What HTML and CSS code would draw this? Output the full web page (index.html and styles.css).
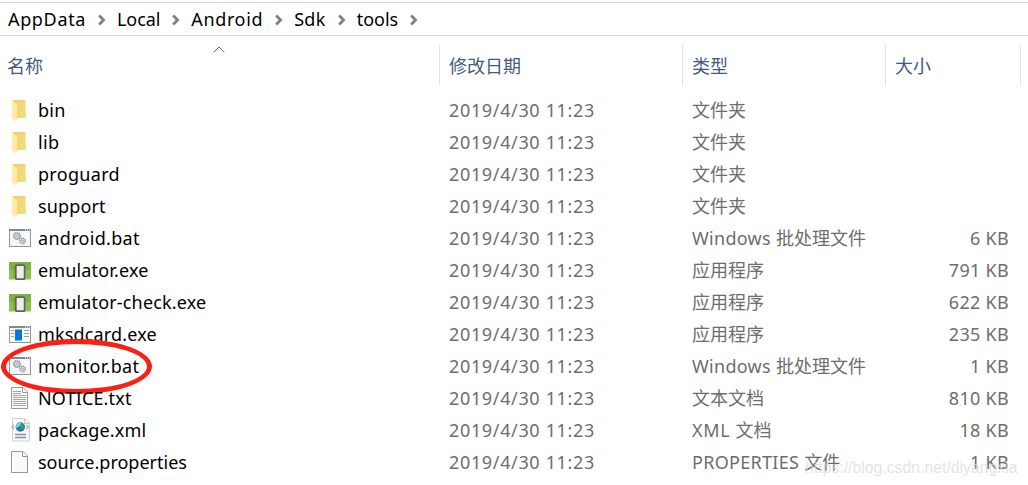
FILE: index.html
```html
<!DOCTYPE html>
<html lang="zh-CN">
<head>
  <meta charset="UTF-8" />
  <title>tools</title>
  <link rel="stylesheet" href="styles.css">
</head>
<body>

<!-- iconos compartidos -->
<svg class="sprites" width="0" height="0">
  <defs>
    <linearGradient id="amarillo" x1="0" y1="0" x2="1" y2="1">
      <stop offset="0" stop-color="#f3d070" />
      <stop offset="1" stop-color="#fadb80" />
    </linearGradient>
  </defs>
  <symbol id="chevron" viewBox="0 0 8 12">
    <path d="M1.2 1.5L5.6 6L1.2 10.5" fill="none" stroke="#808080" stroke-width="2.8" />
  </symbol>
  <symbol id="folder" viewBox="0 0 24 24">
    <path d="M6 2h12.500v12l.5 1v5H6z" fill="url(#amarillo)" />
    <path d="M5 2l4.500 3.500q.5 .5 .5 1.500v15l-1 1-4-3z" fill="#ffe9a6" />
    <path d="M5.500 2H9v3z" fill="#f3d070" />
  </symbol>
  <symbol id="bat" viewBox="0 0 24 24">
    <rect x="2.5" y="3.5" width="21" height="17" fill="#f7f7f7" stroke="#92959a" />
    <path d="M2 4h22" stroke="#85888d" stroke-width="2" />
    <path d="M18 4h1M20 4h1M22 4h1" stroke="#fff" />
    <circle cx="10" cy="10" r="3.2" fill="#e8ecef" stroke="#8595a0" stroke-width="1.8" stroke-dasharray="1.3 .8" />
    <circle cx="10" cy="10" r="2.5" fill="none" stroke="#a4b0b9" stroke-width=".8" />
    <circle cx="10" cy="10" r="1" fill="#fff" stroke="#82919d" stroke-width=".7" />
    <circle cx="15.5" cy="15" r="2.7" fill="#e8ecef" stroke="#8595a0" stroke-width="1.6" stroke-dasharray="1.3 .8" />
    <circle cx="15.5" cy="15" r="1" fill="#fff" stroke="#82919d" stroke-width=".7" />
  </symbol>
  <symbol id="emulator" viewBox="0 0 24 24">
    <rect x="2" y="4" width="22" height="17.5" rx="1" fill="#8bc34a" />
    <path d="M2 5q0-1 1-1h20q1 0 1 1v7H2z" fill="#7cb342" />
    <path d="M8 21l-2-2V8l3-2z" fill="#65983a" opacity=".5" />
    <rect x="8.8" y="7.2" width="8.8" height="14" rx="1" fill="#eee" stroke="#616161" stroke-width="1.7" />
  </symbol>
  <symbol id="exe" viewBox="0 0 24 24">
    <rect x="2.5" y="4.5" width="21" height="16" fill="#f8f8f8" stroke="#92959a" />
    <path d="M2 5h22" stroke="#85888d" stroke-width="2" />
    <path d="M18 5h1M20 5h1M22 5h1" stroke="#fff" />
    <rect x="8" y="7.5" width="7" height="11" fill="#0078d7" />
    <path d="M4 8.5h3M4 11.5h3M4 14.5h3M17 8.5h5M17 11.5h5M17 14.5h5" stroke="#969a9e" />
  </symbol>
  <symbol id="txt" viewBox="0 0 24 24">
    <path d="M4.500 1.500h11.500l4.500 4.500v16.500h-16z" fill="#fafafa" stroke="#969696" />
    <path d="M15.500 2v4.500h5" fill="#fff" stroke="#969696" />
    <path d="M6 5.500h8M6 7.500h8M6 9.500h13M6 11.500h13M6 13.500h13M6 15.500h13M6 17.500h13M6 19.500h13" stroke="#a5a5a5" />
  </symbol>
  <symbol id="xml" viewBox="0 0 24 24">
    <path d="M5.500 .5h12.500l4.500 4.500v18h-17z" fill="#f9f9f9" stroke="#d2d2d2" />
    <path d="M17.500 1v4.500h5" fill="#ececec" stroke="#c4c4c4" />
    <circle cx="13.300" cy="9" r="4.700" fill="#1f70bd" />
    <path d="M9.500 6.500q2-2.500 5-2l-1 3-2 1-1.500 2-1-2z" fill="#86ccec" />
    <path d="M14 6l3 0 1 3-2 3-2-1-1-3zM10 10l2 1v2z" fill="#2f9e55" />
    <path d="M7 7l-2 2 2 2M19.500 7l2 2-2 2" fill="none" stroke="#8eb3cc" stroke-width="1.300" />
    <path d="M8 16.500h11M8 19.500h11" stroke="#8c8cad" stroke-width="1.300" />
  </symbol>
  <symbol id="file" viewBox="0 0 24 24">
    <path d="M4.500 1.500h11.500l4.500 4.500v16.500h-16z" fill="#fafafa" stroke="#969696" />
    <path d="M15.500 2v4.500h5" fill="#fff" stroke="#969696" />
  </symbol>
</svg>

<nav class="ruta">
  <span class="ancha">AppData</span><svg class="flecha"><use href="#chevron" /></svg>
  <span class="estrecha">Local</span><svg class="flecha"><use href="#chevron" /></svg>
  <span class="ancha">Android</span><svg class="flecha"><use href="#chevron" /></svg>
  <span class="media">Sdk</span><svg class="flecha"><use href="#chevron" /></svg>
  <span>tools</span><svg class="flecha"><use href="#chevron" /></svg>
</nav>

<div class="cabecera">
  <div class="col">名称
    <svg class="orden" viewBox="0 0 12 7"><path d="M.7 6.300L6 1l5.300 5.300" fill="none" stroke="#666" /></svg>
  </div>
  <div class="col">修改日期</div>
  <div class="col">类型</div>
  <div class="col">大小</div>
</div>

<div class="lista">
  <div class="fila"><svg class="icono"><use href="#folder" /></svg><span class="nombre media">bin</span><span class="fecha">2019/4/30 11:23</span><span class="tipo">文件夹</span><span class="peso"></span></div>
  <div class="fila"><svg class="icono"><use href="#folder" /></svg><span class="nombre media">lib</span><span class="fecha">2019/4/30 11:23</span><span class="tipo">文件夹</span><span class="peso"></span></div>
  <div class="fila"><svg class="icono"><use href="#folder" /></svg><span class="nombre media">proguard</span><span class="fecha">2019/4/30 11:23</span><span class="tipo">文件夹</span><span class="peso"></span></div>
  <div class="fila"><svg class="icono"><use href="#folder" /></svg><span class="nombre">support</span><span class="fecha">2019/4/30 11:23</span><span class="tipo">文件夹</span><span class="peso"></span></div>
  <div class="fila"><svg class="icono"><use href="#bat" /></svg><span class="nombre media">android.bat</span><span class="fecha">2019/4/30 11:23</span><span class="tipo"><span class="media">Windows </span>批处理文件</span><span class="peso">6 KB</span></div>
  <div class="fila"><svg class="icono"><use href="#emulator" /></svg><span class="nombre">emulator.exe</span><span class="fecha">2019/4/30 11:23</span><span class="tipo">应用程序</span><span class="peso">791 KB</span></div>
  <div class="fila"><svg class="icono"><use href="#emulator" /></svg><span class="nombre">emulator-check.exe</span><span class="fecha">2019/4/30 11:23</span><span class="tipo">应用程序</span><span class="peso">622 KB</span></div>
  <div class="fila"><svg class="icono"><use href="#exe" /></svg><span class="nombre">mksdcard.exe</span><span class="fecha">2019/4/30 11:23</span><span class="tipo">应用程序</span><span class="peso">235 KB</span></div>
  <div class="fila"><svg class="icono"><use href="#bat" /></svg><span class="nombre media">monitor.bat</span><span class="fecha">2019/4/30 11:23</span><span class="tipo"><span class="media">Windows </span>批处理文件</span><span class="peso">1 KB</span>
    <div class="marca"></div>
  </div>
  <div class="fila"><svg class="icono"><use href="#txt" /></svg><span class="nombre">NOTICE.txt</span><span class="fecha">2019/4/30 11:23</span><span class="tipo">文本文档</span><span class="peso">810 KB</span></div>
  <div class="fila"><svg class="icono"><use href="#xml" /></svg><span class="nombre">package.xml</span><span class="fecha">2019/4/30 11:23</span><span class="tipo"><span class="ancha">XML </span>文档</span><span class="peso">18 KB</span></div>
  <div class="fila"><svg class="icono"><use href="#file" /></svg><span class="nombre estable">source.properties</span><span class="fecha">2019/4/30 11:23</span><span class="tipo"><span class="media">PROPERTIES </span>文件</span><span class="peso">1 KB</span></div>
</div>

<div class="firma">https://blog.csdn.net/diyangxia</div>

</body>
</html>
```
FILE: styles.css
```css
body {
  margin: 0;
  height: 485px;
  overflow: hidden;
  position: relative;
  background: white;
  color: #000;
  font-family: "Noto Sans", "Noto Sans CJK SC", sans-serif;
  font-size: 18px;
}

.sprites {
  position: absolute;
}

.ruta {
  display: flex;
  align-items: center;
  height: 32px;
  margin-top: 2px;
  padding-left: 8px;
  border-top: 1px solid #d9d9d9;
  border-bottom: 1px solid #d9d9d9;
}

.flecha {
  width: 8px;
  height: 12px;
  margin: 1px 11px 0 12px;
}

.cabecera {
  display: grid;
  grid-template-columns: 440px 243px 203px 135px;
  height: 41px;
  margin-top: 9px;
  color: #44597c;
}

.col {
  position: relative;
  box-sizing: border-box;
  padding-left: 9px;
  line-height: 43px;
  height: 41px;
  border-right: 1px solid #e2e2e2;
}

.col:first-child {
  padding-left: 7px;
}

.orden {
  position: absolute;
  left: 213px;
  top: 1px;
  width: 12px;
  height: 7px;
}

.lista {
  margin-top: 8px;
}

.fila {
  position: relative;
  display: grid;
  grid-template-columns: 31px 411px 243px 200px 117px;
  align-items: center;
  height: 32px;
  padding-left: 7px;
  line-height: 32px;
  white-space: nowrap;
}

.icono {
  width: 24px;
  height: 24px;
}

.nombre {
  letter-spacing: 0.15px;
}

.fecha, .tipo, .peso {
  color: #6d6d6d;
}

.fecha {
  letter-spacing: 0.65px;
}

.peso {
  text-align: right;
  letter-spacing: 0.3px;
}

.media {
  letter-spacing: 0.3px;
}

.ancha {
  letter-spacing: 0.65px;
}

.estrecha {
  letter-spacing: -0.1px;
}

.estable {
  letter-spacing: 0;
}

.marca {
  position: absolute;
  left: 1px;
  top: -11px;
  box-sizing: border-box;
  width: 151px;
  height: 55px;
  border: 5px solid #fb2013;
  border-radius: 50%;
}

.firma {
  position: absolute;
  left: 805px;
  top: 459px;
  font-family: "Liberation Sans", sans-serif;
  font-size: 15.8px;
  line-height: 18px;
  color: rgba(215, 215, 215, 0.7);
}
```
